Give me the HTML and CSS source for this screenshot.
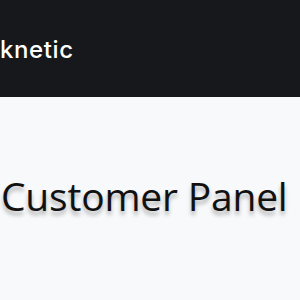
FILE: index.html
```
<!DOCTYPE html>
<html>
<head>
<meta charset="utf-8">
<link rel="stylesheet" href="styles.css">
</head>
<body>
<header class="topbar">
  <span class="brand">knetic</span>
</header>
<main class="content">
  <h1 class="title">Customer Panel</h1>
</main>
</body>
</html>
```
FILE: styles.css
```
html, body {
  margin: 0;
  padding: 0;
  background: #f8f9fb;
}
.topbar {
  height: 97px;
  background: #17181c;
  display: flex;
  align-items: center;
  padding-top: 2px;
  box-sizing: border-box;
}
.brand {
  font-family: Inter, "Noto Sans", sans-serif;
  font-size: 24px;
  font-weight: 500;
  color: #ffffff;
  letter-spacing: 0.6px;
}
.content {
  padding: 0 0 0 1px;
}
.title {
  margin: 72px 0 0 0;
  font-family: "Open Sans", sans-serif;
  font-weight: 400;
  font-size: 39px;
  line-height: 54px;
  letter-spacing: -0.2px;
  color: #111111;
  text-shadow: 0 4px 4px rgba(0, 0, 0, 0.3);
  white-space: nowrap;
}
```
